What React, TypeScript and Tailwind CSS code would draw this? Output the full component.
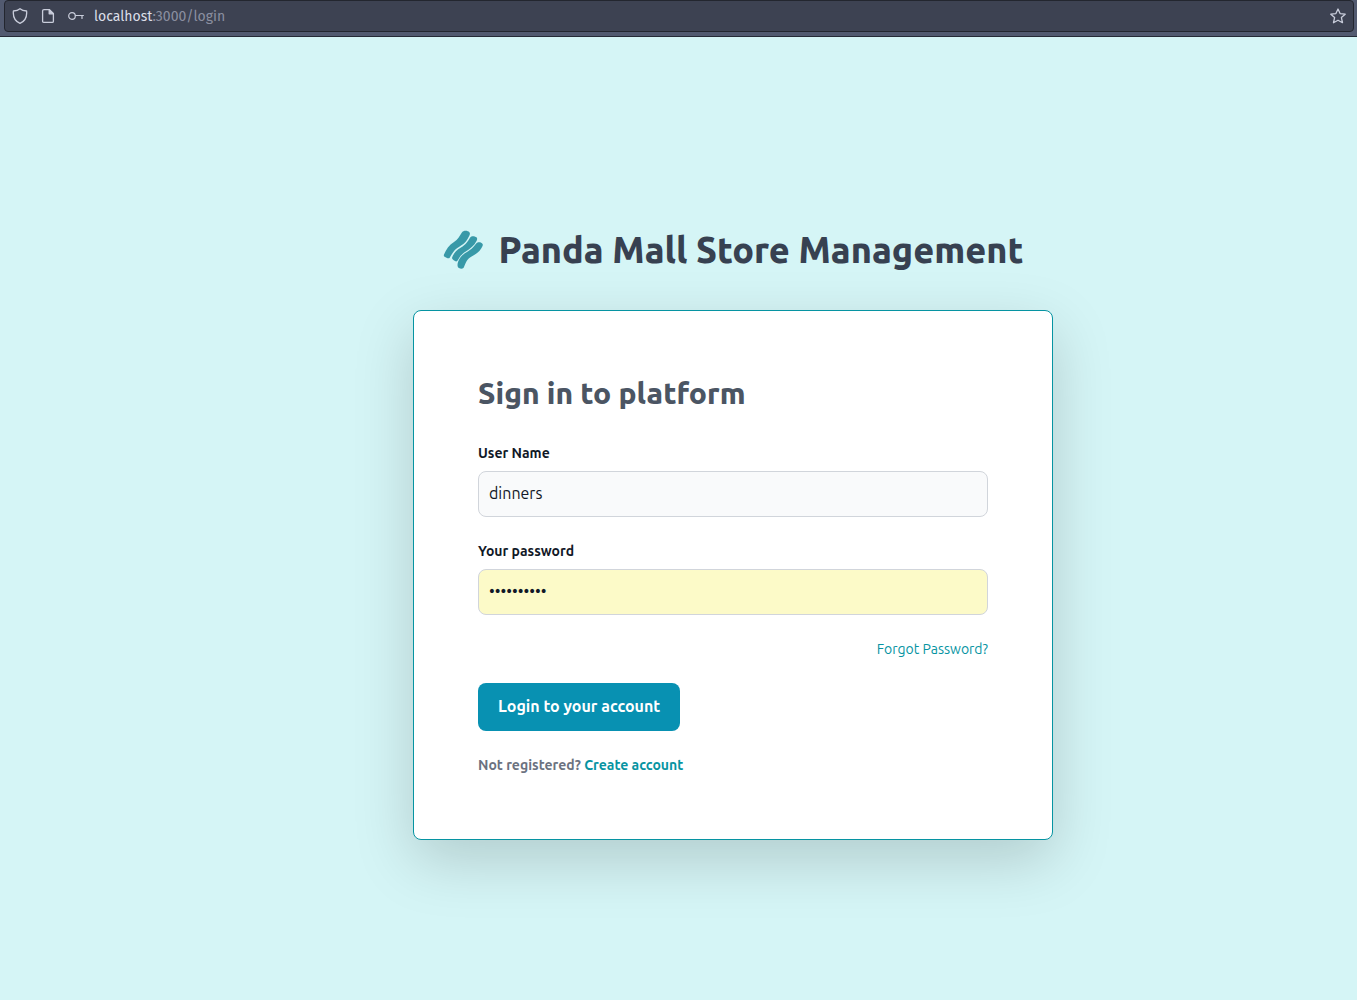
import { useState } from "react";

function ShieldIcon() {
  return (
    <svg className="size-4" viewBox="0 0 16 16" fill="none" stroke="#c9cddb" strokeWidth="1.3" strokeLinejoin="round" aria-hidden="true">
      <path d="M8 .8 C6.4 2.2 4 2.9 1.4 3 C.9 8.2 3 13.2 8 15.3 C13 13.2 15.1 8.2 14.6 3 C12 2.9 9.6 2.2 8 .8Z" />
    </svg>
  );
}

function PageIcon() {
  return (
    <svg className="size-4" viewBox="0 0 16 16" fill="none" stroke="#c9cddb" strokeWidth="1.3" strokeLinejoin="round" aria-hidden="true">
      <path d="M4 1.6H9.4L13.4 5.6V13.2Q13.4 14.4 12.2 14.4H3.8Q2.6 14.4 2.6 13.2V2.8Q2.6 1.6 4 1.6Z" />
      <path d="M9.2 1.6V5.8H13.4Z" fill="#c9cddb" />
    </svg>
  );
}

function KeyIcon() {
  return (
    <svg className="size-4" viewBox="0 0 16 16" fill="none" stroke="#c9cddb" strokeWidth="1.2" strokeLinecap="round" aria-hidden="true">
      <circle cx="4" cy="8" r="3.3" />
      <path d="M7.4 7.5H15.4M14 7.5V10.4" />
    </svg>
  );
}

function StarIcon() {
  return (
    <svg className="size-4" viewBox="0 0 16 16" fill="none" stroke="#c9cddb" strokeWidth="1.3" strokeLinejoin="round" aria-hidden="true">
      <path d="M8 1 L10.1 5.6 L15.2 6.2 L11.4 9.6 L12.5 14.7 L8 12.2 L3.5 14.7 L4.6 9.6 L.8 6.2 L5.9 5.6Z" />
    </svg>
  );
}

function Logo() {
  return (
    <svg className="size-10 shrink-0" viewBox="12 10 40 40" fill="#3899a8" aria-hidden="true">
      <path d="M13 34.6 C15 29.5 18 25.2 23 22 C27 19.4 28.5 16 30.7 12.7 C32.4 10 36.6 10.2 38.4 12.2 C39.4 13.5 38.8 14.8 37.9 16.6 C35.8 21 33.3 24 28.3 26.7 C23 29.4 21.2 33.8 18.7 37.7 C17.8 39.1 15.3 37.9 13.6 36.7 C12.8 36.1 12.6 35.6 13 34.6Z" />
      <path d="M21.2 37.2 C23 32.8 25.4 30.2 30 27.5 C34.8 24.7 36.6 21.6 39.2 17.5 C40.4 15.5 44.2 15.9 45.7 17.6 C46.4 18.5 46.2 19.6 45.5 21 C43.2 25.5 39.5 28.7 34.8 31.4 C30.2 34.1 28.4 37.5 26.6 40.6 C25.7 42.3 23.4 40.9 21.9 39.6 C21 38.8 20.9 38.2 21.2 37.2Z" />
      <path d="M27.1 41.7 C29.2 36.7 31.7 34.4 36.4 31.7 C40.7 29.2 42.4 27.2 45.2 23.6 C46.9 21.4 50.4 22.1 51.6 23.9 C52.2 25 51.5 26.3 50.5 28 C48 32.2 44.6 34.3 40.6 36.4 C36 38.8 34.7 42.5 33 47.1 C32.3 49.4 29.6 49.1 27.5 47.8 C26 46.7 26.5 43.5 27.1 41.7Z" />
    </svg>
  );
}

export default function App() {
  const [user, setUser] = useState("dinners");
  const [password, setPassword] = useState("pandamall1");

  return (
    <div className="flex min-h-screen flex-col bg-[#d5f5f6] font-['Ubuntu','Noto_Sans',sans-serif]">
      <header className="border-b border-[#252a36] bg-[#525a70] pr-[3px] pb-1 pl-1">
        <div className="flex h-8 items-center gap-3 rounded-sm border border-[#23262f] bg-[#3d4252] px-[7px]">
          <ShieldIcon />
          <PageIcon />
          <KeyIcon />
          <p className="-ml-0.5 flex-1 pt-0.5 font-['Fira_Sans','Noto_Sans',sans-serif] text-sm text-[#8b8fa0]">
            <span className="text-[#dcdfe8]">localhost</span>:3000/login
          </p>
          <button type="button" aria-label="Bookmark this page">
            <StarIcon />
          </button>
        </div>
      </header>

      <main className="flex flex-1 flex-col items-center pt-[193px] pb-10 pl-[109px]">
        <a href="#" className="mb-10 flex h-10 items-center gap-4 whitespace-nowrap text-4xl font-extrabold text-[#374151]">
          <Logo />
          <h1>Panda Mall Store Management</h1>
        </a>

        <section className="w-full max-w-[640px] rounded-lg border border-[#0694a2] bg-white p-16 shadow-[0_20px_60px_rgba(0,0,0,0.17)]">
          <h2 className="text-3xl font-extrabold text-[#4b5563]">Sign in to platform</h2>
          <form className="mt-8 flex flex-col gap-6" onSubmit={(e) => e.preventDefault()}>
            <div>
              <label htmlFor="username" className="mb-2 block text-sm font-semibold text-[#111827]">
                User Name
              </label>
              <input
                id="username"
                type="text"
                value={user}
                onChange={(e) => setUser(e.target.value)}
                className="block h-[46px] w-full rounded-lg border border-[#d1d5db] bg-[#f9fafb] px-2.5 pb-0.5 text-base text-[#111827]"
              />
            </div>
            <div>
              <label htmlFor="password" className="mb-2 block text-sm font-semibold text-[#111827]">
                Your password
              </label>
              <input
                id="password"
                type="password"
                value={password}
                onChange={(e) => setPassword(e.target.value)}
                className="block h-[46px] w-full rounded-lg border border-[#d1d5db] bg-[#fcfac8] px-2.5 pb-0.5 text-base text-[#111827]"
              />
            </div>
            <a href="#" className="self-end text-sm text-[#0694a2]">
              Forgot Password?
            </a>
            <button type="submit" className="h-12 self-start rounded-lg bg-[#0891b2] px-5 pb-0.5 text-base font-semibold text-white">
              Login to your account
            </button>
            <p className="text-sm font-semibold text-[#6b7280]">
              Not registered?{" "}
              <a href="#" className="text-[#0694a2]">
                Create account
              </a>
            </p>
          </form>
        </section>
      </main>
    </div>
  );
}
